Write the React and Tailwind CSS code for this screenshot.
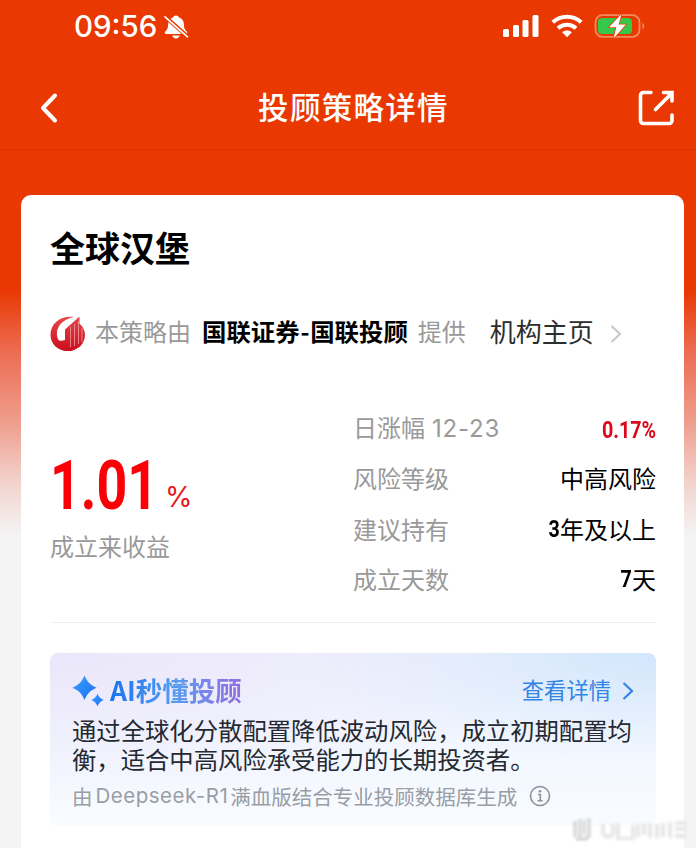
import React from 'react';

const metrics = [
  { label: '日涨幅', date: '12-23', number: '0.17%', text: '', up: true },
  { label: '风险等级', number: '', text: '中高风险' },
  { label: '建议持有', number: '3', text: '年及以上' },
  { label: '成立天数', number: '7', text: '天' },
];

const summary = [
  '通过全球化分散配置降低波动风险，成立初期配置均',
  '衡，适合中高风险承受能力的长期投资者。',
];

const BellOffIcon = () => (
  <svg width="26" height="28" viewBox="0 0 26 28" fill="none">
    <path
      d="M13 2.500c-1.600 0-2.600.8-3 2.100C6.700 5.600 5.200 8 5.100 11.500c-.1 4-1 5.300-2.900 7.100-.9 1-.4 2.400 1 2.400h19.600c1.400 0 1.900-1.400 1-2.400-1.900-1.800-2.800-3.100-2.900-7.100-.1-3.500-1.600-5.900-4.900-6.900-.4-1.300-1.400-2.100-3-2.100z"
      fill="white"
    />
    <path d="M9.300 22.500h7.400c-.4 1.800-1.800 2.900-3.700 2.900s-3.300-1.100-3.700-2.900z" fill="white" />
    <path d="M2 3.500 24.500 23.500" stroke="#e93802" strokeWidth="4" />
    <path d="M2 3.800 24.500 23.800" stroke="white" strokeWidth="1.700" strokeLinecap="round" />
  </svg>
);

const SignalIcon = () => (
  <svg width="38" height="24" viewBox="0 0 38 24" fill="white">
    <rect x="0" y="15" width="6" height="8" rx="1.500" />
    <rect x="10" y="11" width="6" height="12" rx="1.500" />
    <rect x="19.500" y="6" width="6" height="17" rx="1.500" />
    <rect x="29.500" y="1" width="6" height="22" rx="1.500" />
  </svg>
);

const WifiIcon = () => (
  <svg width="32" height="24" viewBox="0 0 32 24" fill="none" stroke="white" strokeWidth="4">
    <path d="M1.800 8.200C9.600.8 22.400.8 30.200 8.200" />
    <path d="M7 14.300c5-4.800 13-4.800 18 0" />
    <path d="M16 23.200l-4.900-5c2.800-2.400 7-2.400 9.800 0z" fill="white" stroke="none" />
  </svg>
);

const BatteryIcon = () => (
  <svg width="53" height="26" viewBox="0 0 53 26" fill="none">
    <rect x="1.500" y="2.200" width="44" height="21.600" rx="7" stroke="#f58a5c" strokeWidth="1.800" />
    <path d="M48.500 9.800c2.200.7 2.200 5.900 0 6.600z" fill="#f58a5c" />
    <rect x="4" y="5" width="34" height="16" rx="4" fill="#36c84b" />
    <path
      d="M27.500 1 15 14.300h7.300L19.500 25.500l12.500-14h-7.300z"
      fill="white"
      stroke="#e93802"
      strokeWidth="1.600"
      strokeLinejoin="round"
      paintOrder="stroke"
    />
  </svg>
);

const BackIcon = () => (
  <svg width="20" height="32" viewBox="0 0 20 32" fill="none">
    <path d="M17 3.500 5 16l12 12.500" stroke="white" strokeWidth="4" strokeLinecap="round" strokeLinejoin="round" />
  </svg>
);

const ShareIcon = () => (
  <svg width="38" height="38" viewBox="0 0 38 38" fill="none" stroke="white" strokeWidth="3.600">
    <path d="M14 3.500H6.500a3 3 0 0 0-3 3v25a3 3 0 0 0 3 3H32a3 3 0 0 0 3-3V26" strokeLinecap="round" />
    <path d="M18.500 20.500 32 7" strokeLinecap="round" />
    <path d="M26.500 3.500H35V12" strokeLinecap="round" />
    <path d="M28 3h7.500v7.500z" fill="white" stroke="none" />
  </svg>
);

const BrandLogo = () => (
  <svg width="36" height="36" viewBox="0 0 36 36" fill="none">
    <defs>
      <linearGradient id="brand" x1="0" y1="0" x2="0" y2="1">
        <stop offset="0" stopColor="#e5474c" />
        <stop offset="1" stopColor="#cb0e1d" />
      </linearGradient>
    </defs>
    <path d="M24 1C11-.5.500 7 .500 19c0 9 7.500 16 17 16 3 0 5-.5 7-1.500C15 32 8 27.500 7 19.500 6 11 12 3.500 24 1z" fill="url(#brand)" />
    <path d="M5 22.500c2 2 6 3 10 1.500V13.500L29.500.500v7c3.500 3 5.500 7 5.500 11.500 0 9-7.500 16-17 16-6 0-11-5-13-12.500z" fill="url(#brand)" />
    <path d="M20.500 11v20M24.500 8v22M28.500 5v23M32 12v14" stroke="#f4a9ac" strokeWidth="0.700" />
  </svg>
);

const SparkleIcon = () => (
  <svg width="34" height="34" viewBox="0 0 34 34">
    <defs>
      <linearGradient id="sparkle" x1="0" y1="0" x2="1" y2="1">
        <stop offset="0" stopColor="#3ba0ff" />
        <stop offset="1" stopColor="#1b6ff0" />
      </linearGradient>
    </defs>
    <path d="M12.500 1.500c2.800 6.600 5.600 9.400 12.200 12.200-6.600 2.800-9.400 5.600-12.200 12.200C9.700 19.300 6.900 16.500.300 13.700 6.900 10.900 9.700 8.100 12.500 1.500z" fill="url(#sparkle)" />
    <path d="M25.500 19.800c1.500 3.400 2.800 4.700 6.200 6.200-3.400 1.500-4.700 2.800-6.200 6.200-1.500-3.400-2.800-4.700-6.200-6.200 3.400-1.500 4.700-2.800 6.200-6.200z" fill="url(#sparkle)" />
  </svg>
);

const Chevron = ({ className }) => (
  <svg width="12" height="20" viewBox="0 0 12 20" fill="none" stroke="currentColor" strokeWidth="2.200" className={className}>
    <path d="M1.500 2 10 10l-8.500 8" />
  </svg>
);

const InfoIcon = () => (
  <svg width="22" height="22" viewBox="0 0 22 22" fill="none" stroke="#8d9199" strokeWidth="1.600">
    <circle cx="11" cy="11" r="9.500" />
    <path d="M9 9.500h2.300v6M8.500 15.700h5.200" />
    <circle cx="11" cy="6.200" r="1.300" fill="#8d9199" stroke="none" />
  </svg>
);

// faded stamp in the lower right corner
const Stamp = () => (
  <svg width="120" height="30" viewBox="0 0 120 30" fill="none" className="absolute left-[570px] top-[815px] blur-[1.500px]">
    <path d="M5 6v16M10 4v18M14 5v15M19 3v18l-3 3H6" stroke="#c8c8c8" strokeWidth="2.500" />
    <path d="M33 9v8c0 6 10 6 10 0V9M48 8v15h15V10M68 9v13M74 8v12M80 8v15M87 9v14M93 8v14M100 7v16M105 8h11M105 14h11M105 21h11" stroke="#e6e6e6" strokeWidth="4" />
    <path d="M50 21h12M12 6v14M102 11h10" stroke="white" strokeWidth="2" />
  </svg>
);

const StatusBar = () => (
  <div className="flex h-[52px] items-center justify-between pl-[74px] pr-[49px]">
    <div className="flex items-center gap-[6px] pt-[2px]">
      <span className="font-['Inter'] text-[29.500px] font-medium leading-none">09:56</span>
      <BellOffIcon />
    </div>
    <div className="flex items-center">
      <SignalIcon />
      <span className="ml-[10px]"><WifiIcon /></span>
      <span className="ml-[11px]"><BatteryIcon /></span>
    </div>
  </div>
);

const NavBar = () => (
  <div className="flex h-[99px] items-center justify-between border-b-2 border-[#e03500] pl-[38px] pr-[21px] pt-[15px]">
    <BackIcon />
    <h1 className="ml-[12px] mt-[-4px] text-[30.500px] font-medium leading-none tracking-[1.300px]">投顾策略详情</h1>
    <ShareIcon />
  </div>
);

const Provider = () => (
  <div className="mt-[44px] flex h-9 items-center whitespace-nowrap text-2xl leading-9">
    <BrandLogo />
    <div className="mt-[-6px] flex items-center">
      <span className="ml-[9px] text-[#999999]">本策略由</span>
      <span className="ml-[11px] text-[24.400px] font-bold text-black">
        国联证券<span className="mx-[0.800px]">-</span>国联投顾
      </span>
      <span className="ml-[10px] text-[#999999]">提供</span>
      <span className="ml-6 text-[26px] text-[#2d2d2d]">机构主页</span>
    </div>
    <Chevron className="ml-[16px] text-[#c9c9c9]" />
  </div>
);

const Performance = () => (
  <div className="mt-[51px] flex justify-between">
    <div className="pt-[50px]">
      <div className="flex h-[66px] items-end text-[#fb0007]">
        <span className="inline-block w-[115px] origin-left scale-x-[0.79] font-['Roboto'] text-[68px] font-bold leading-[66px]">
          1.01
        </span>
        <span className="font-['Inter'] text-[28px] leading-[43px] text-[#e81620]">%</span>
      </div>
      <div className="mt-[9px] text-2xl leading-9 text-[#999999]">成立来收益</div>
    </div>
    <div className="flex w-[303px] flex-col">
      {metrics.map((item) => (
        <div key={item.label} className="flex h-[50.300px] items-center justify-between text-2xl leading-9">
          <span className="text-[#999999]">
            {item.label}
            {item.date && <span className="ml-[7px] font-['Inter'] tracking-[0.800px]">{item.date}</span>}
          </span>
          <span className={`flex items-center ${item.up ? 'pt-[3px] text-[#dc0818]' : 'text-black'}`}>
            <span className="origin-right scale-x-[0.82] font-['Roboto'] font-bold">{item.number}</span>
            {item.text}
          </span>
        </div>
      ))}
    </div>
  </div>
);

const AiSummary = () => (
  <section className="mt-[30px] h-[173px] rounded-lg bg-[radial-gradient(ellipse_at_top_left,#ebe6fa_0%,#ebe6fa00_60%),radial-gradient(ellipse_at_top_right,#d2e6fc_0%,#d2e6fc00_45%),linear-gradient(180deg,#f2f5fe_0%,#f4f8ff_70%,#f9fcff_100%)] pl-[22px] pr-[22px] pt-[20px]">
    <div className="flex h-9 items-center justify-between">
      <div className="flex items-center">
        <SparkleIcon />
        <h3 className="ml-[4px] mt-[-2px] bg-linear-to-r from-[#1475ed] via-[#559bf0] to-[#916be0] bg-clip-text text-[26.500px] font-bold leading-9 text-transparent">
          AI秒懂投顾
        </h3>
      </div>
      <a className="flex items-center text-[22.300px] leading-9 text-[#3285e5]">
        <span className="mt-[-4px]">查看详情</span>
        <Chevron className="ml-[11px]" />
      </a>
    </div>
    <div className="mt-[6px] whitespace-nowrap text-[24.350px] leading-[29px] text-[#252931]">
      {summary.map((line) => (
        <p key={line}>{line}</p>
      ))}
    </div>
    <div className="mt-[8px] flex items-center whitespace-nowrap text-[20.500px] leading-[30px] text-[#999da5]">
      <span>由</span>
      <span className="ml-[3px] font-['Inter'] tracking-[0.500px]">Deepseek-R1</span>
      <span className="ml-[2px]">满血版结合专业投顾数据库生成</span>
      <span className="ml-[12px]"><InfoIcon /></span>
    </div>
  </section>
);

const App = () => {
  return (
    <div className="relative h-[848px] w-[696px] overflow-hidden bg-[#f4f4f4] bg-[linear-gradient(180deg,#e93802_0px,#e93802_290px,#ec6b51_350px,#efa090_425px,#f2d1ca_480px,#f4f4f4_535px)] font-['Noto_Sans_CJK_SC',sans-serif]">
      <header className="text-white">
        <StatusBar />
        <NavBar />
      </header>
      <main className="ml-[21px] mt-[44px] h-[660px] w-[663px] rounded-t-[10px] bg-white pl-[29px] pr-[28px] pt-[27px]">
        <h2 className="text-[35px] font-bold leading-[50px] text-black">全球汉堡</h2>
        <Provider />
        <Performance />
        <div className="mt-[18px] h-px bg-[#f0f0f0]" />
        <AiSummary />
      </main>
      <Stamp />
    </div>
  );
};

export default App;
